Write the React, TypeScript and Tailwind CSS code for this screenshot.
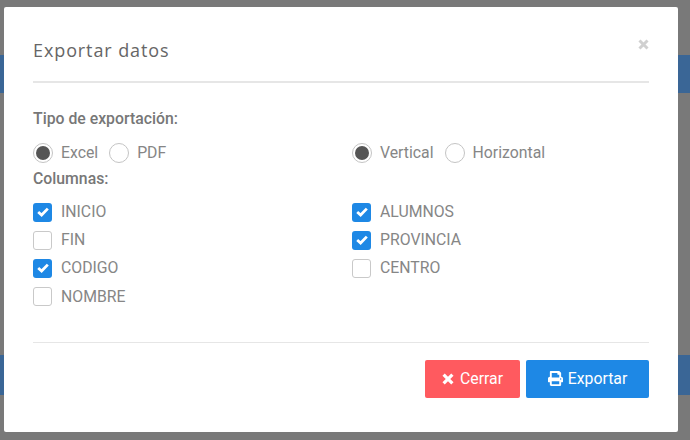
import { FaPrint } from "react-icons/fa";

const leftCols = [
  { label: "INICIO", on: true },
  { label: "FIN", on: false },
  { label: "CODIGO", on: true },
  { label: "NOMBRE", on: false },
];
const rightCols = [
  { label: "ALUMNOS", on: true },
  { label: "PROVINCIA", on: true },
  { label: "CENTRO", on: false },
];

function XIcon({ className }: { className: string }) {
  return (
    <svg viewBox="0 0 12 12" className={className} fill="none" stroke="currentColor" strokeWidth="3.2">
      <path d="M1.6 1.6 10.4 10.4M10.4 1.6 1.6 10.4" />
    </svg>
  );
}

function Radio({ label, on }: { label: string; on?: boolean }) {
  return (
    <label className="flex items-center">
      <span className="flex h-[20px] w-[20px] items-center justify-center rounded-full border border-[#c4c4c4] bg-white">
        {on && <span className="h-[14px] w-[14px] rounded-full bg-[#555555]" />}
      </span>
      <span className="ml-[8px] text-[15.8px] leading-[20px] text-[#868686]">{label}</span>
    </label>
  );
}

function Check({ label, on }: { label: string; on: boolean }) {
  return (
    <label className="flex h-[20px] items-center">
      {on ? (
        <span className="flex h-[19px] w-[19px] items-center justify-center rounded-[3px] bg-[#1e88e5]">
          <svg viewBox="0 0 12 10" className="h-[10px] w-[12px]" fill="none" stroke="white" strokeWidth="2.8">
            <path d="M1.2 5 4.6 8 10.8 1.6" />
          </svg>
        </span>
      ) : (
        <span className="h-[19px] w-[19px] rounded-[3px] border border-[#c9c9c9] bg-white" />
      )}
      <span className="ml-[9px] text-[15.8px] leading-[20px] text-[#868686]">{label}</span>
    </label>
  );
}

export default function App() {
  return (
    <div className="relative h-[440px] w-[690px] overflow-hidden bg-[#797979] font-['Roboto',sans-serif]">
      <div className="pt-[55px]">
        <div className="h-[38px] bg-[#3a6696]" />
        <div className="mt-[262px] h-[40px] bg-[#3a6696]" />
      </div>

      <div className="absolute left-[4px] top-[7px] h-[425px] w-[674px] rounded-[2px] bg-white px-[29px]">
        <div className="relative border-b-2 border-[#e6e6e6] pb-[19px] pt-[32px]">
          <h4 className="font-['Open_Sans',sans-serif] text-[18px] leading-[23px] tracking-[0.9px] text-[#666666]">
            Exportar datos
          </h4>
          <XIcon className="absolute right-0 top-[32px] h-[11px] w-[11px] text-[#d0d0d0]" />
        </div>

        <p className="mt-[26px] text-[15.8px] font-medium leading-[20px] text-[#777777]">Tipo de exportación:</p>

        <div className="mt-[14px] flex">
          <div className="flex w-[319px] gap-[11px]">
            <Radio label="Excel" on />
            <Radio label="PDF" />
          </div>
          <div className="flex gap-[11px]">
            <Radio label="Vertical" on />
            <Radio label="Horizontal" />
          </div>
        </div>

        <p className="mt-[6px] text-[15.8px] font-medium leading-[20px] text-[#777777]">Columnas:</p>

        <div className="mt-[13px] flex">
          <div className="flex w-[319px] flex-col gap-[8.2px]">
            {leftCols.map((c) => (
              <Check key={c.label} label={c.label} on={c.on} />
            ))}
          </div>
          <div className="flex flex-col gap-[8.2px]">
            {rightCols.map((c) => (
              <Check key={c.label} label={c.label} on={c.on} />
            ))}
          </div>
        </div>

        <div className="mt-[35px] border-t border-[#e6e6e6] pt-[17px]">
          <div className="flex justify-end gap-[6px]">
            <button className="flex h-[38px] w-[95px] items-center justify-center gap-[6px] rounded-[2px] bg-[#ff5a5f] text-[15.8px] text-white">
              <XIcon className="h-[12px] w-[12px]" />
              Cerrar
            </button>
            <button className="flex h-[38px] w-[123px] items-center justify-center gap-[5px] rounded-[2px] bg-[#1e88e5] text-[15.8px] text-white">
              <FaPrint className="text-[15px]" />
              Exportar
            </button>
          </div>
        </div>
      </div>
    </div>
  );
}
